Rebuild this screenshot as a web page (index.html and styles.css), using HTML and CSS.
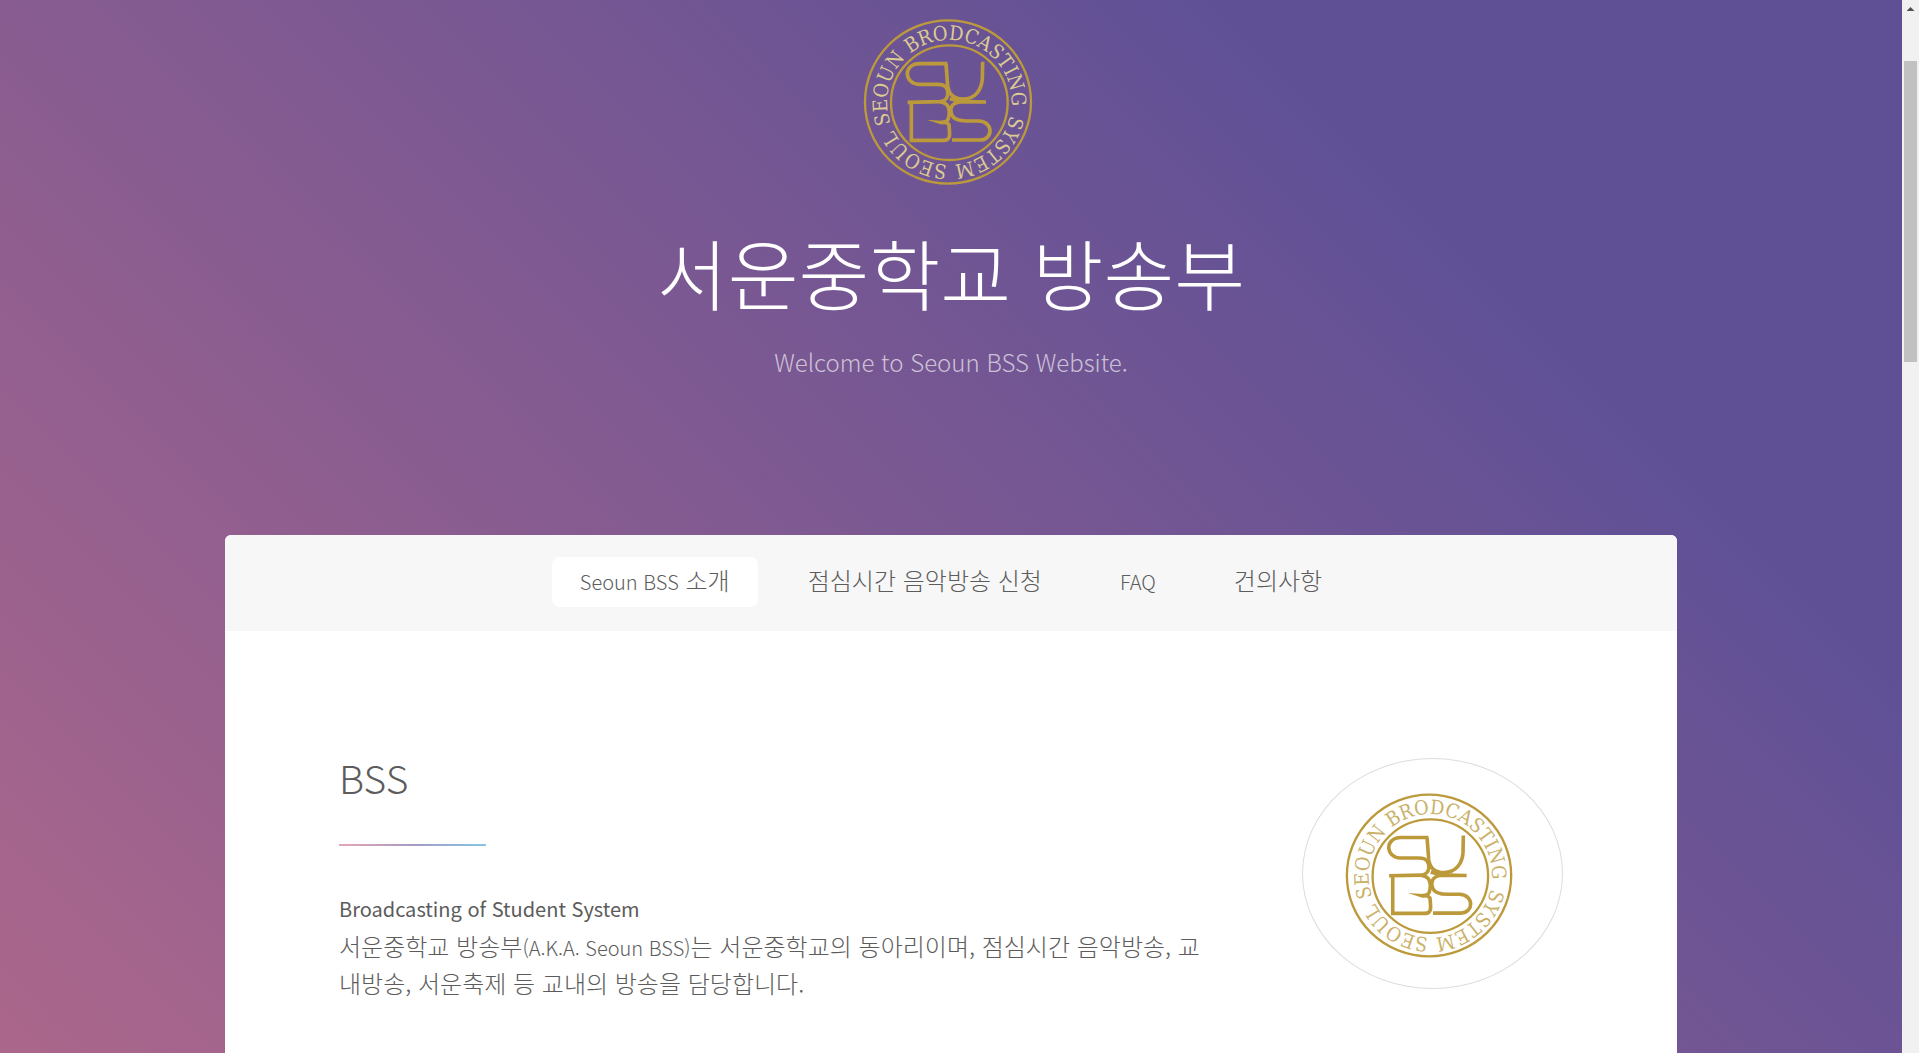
FILE: index.html
```
<!DOCTYPE html>
<html lang="ko">
<head>
<meta charset="utf-8">
<meta name="viewport" content="width=device-width, initial-scale=1">
<title>서운중학교 방송부</title>
<link rel="stylesheet" href="styles.css">
</head>
<body>
<svg class="defs" aria-hidden="true">
  <defs>
    <path id="ring" d="M297 464A187 187 0 0 1 297 90A187 187 0 0 1 297 464"/>
    <g id="emblem">
      <g class="emblem-lines">
        <ellipse cx="293" cy="276" rx="249" ry="245" stroke-width="7"/>
        <ellipse cx="297" cy="278" rx="175" ry="172" stroke-width="7"/>
        <g stroke-width="11">
          <path d="M291 161L208 161C156 162 162 222 206 223H262C286 223 294 235 292 255C290 268 284 272 270 275L172 277"/>
          <path d="M287 161L292 228C296 256 312 267 338 267C376 267 394 238 396 206L397 155"/>
          <path d="M298 266C320 272 350 276 407 276H330C300 278 298 300 304 314C310 330 330 333 350 333H385C430 334 429 389 390 390H305"/>
          <path d="M183 278V391H282C304 390 297 366 296 345C292 338 288 336 280 336M270 276C296 278 299 300 296 318C294 334 286 338 272 337"/>
        </g>
      </g>
      <path class="emblem-wedge" d="M229 329L286 333L294 343H270Z"/>
      <text class="emblem-text">
        <textPath href="#ring" startOffset="6">SEOUL</textPath>
        <textPath href="#ring" startOffset="228">SEOUN</textPath>
        <textPath href="#ring" startOffset="460">BRODCASTING</textPath>
        <textPath href="#ring" startOffset="920">SYSTEM</textPath>
      </text>
    </g>
  </defs>
</svg>

<div class="page">
  <header class="hero">
    <svg class="hero-logo" viewBox="-88 -30 783 600" role="img" aria-label="Seoun BSS"><use href="#emblem"/></svg>
    <h1>서운중학교 방송부</h1>
    <p>Welcome to Seoun BSS Website.</p>
  </header>

  <div class="panel">
    <nav class="tabs">
      <a class="tab active" href="#intro"><span class="latin">Seoun BSS</span> 소개</a>
      <a class="tab" href="#music">점심시간 음악방송 신청</a>
      <a class="tab" href="#faq"><span class="latin">FAQ</span></a>
      <a class="tab" href="#suggest">건의사항</a>
    </nav>
    <main>
      <section class="spotlight" id="intro">
        <div class="content">
          <h2>BSS</h2>
          <h3>Broadcasting of Student System</h3>
          <p>서운중학교 방송부<span class="latin">(A.K.A. Seoun BSS)</span>는 서운중학교의 동아리이며, 점심시간 음악방송, 교내방송, 서운축제 등 교내의 방송을 담당합니다.</p>
        </div>
        <div class="portrait">
          <svg viewBox="-88 -77 783 694" role="img" aria-label="Seoun BSS"><use href="#emblem"/></svg>
        </div>
      </section>
    </main>
  </div>
</div>

<div class="scrollbar" aria-hidden="true">
  <span class="arrow"></span>
  <span class="thumb"></span>
</div>
</body>
</html>
```
FILE: styles.css
```
* {
  box-sizing: border-box;
}

body {
  margin: 0;
  min-height: 100vh;
  display: grid;
  grid-template-columns: minmax(0, 1fr) 17px;
  font-family: "Noto Sans CJK KR", "Noto Sans", sans-serif;
  font-weight: 300;
  font-size: 24px;
  line-height: 37px;
  color: #5c5c5c;
}

h1, h2, h3, p {
  margin: 0;
  font-weight: 300;
}

.defs {
  position: absolute;
  width: 0;
  height: 0;
}

.latin {
  font-size: 20px;
  line-height: 1;
}

.page {
  display: flex;
  flex-direction: column;
  align-items: center;
  background: linear-gradient(45deg, #df7684 -52%, #5f5096 77%);
}

/* Hero */
.hero {
  display: flex;
  flex-direction: column;
  align-items: center;
  padding-bottom: 152px;
  text-align: center;
  color: #fff;
}

.hero-logo {
  width: 261px;
  height: 200px;
  --letters: #dccb92;
}

.hero h1 {
  margin-top: 16px;
  font-size: 77px;
  line-height: 112px;
}

.hero p {
  margin-top: 12px;
  font-size: 24px;
  line-height: 43px;
  color: rgba(255, 255, 255, 0.65);
}

/* Emblem */
.emblem-lines {
  fill: none;
  stroke: #bc9a3c;
}

.emblem-wedge {
  fill: #bc9a3c;
}

.emblem-text {
  font-family: "DejaVu Serif Condensed", "Liberation Serif", serif;
  font-weight: 400;
  font-size: 60px;
  fill: var(--letters);
}

/* Panel */
.panel {
  flex: 1;
  width: calc(100% - 48px);
  max-width: 1452px;
  border-radius: 6px 6px 0 0;
  background: #fff;
  overflow: hidden;
}

.tabs {
  display: flex;
  flex-wrap: wrap;
  justify-content: center;
  gap: 22px;
  padding: 22px 24px 24px;
  background: #f7f7f7;
}

.tab {
  padding: 0 28px 4px;
  border-radius: 8px;
  line-height: 46px;
  color: inherit;
  text-decoration: none;
}

.tab.active {
  background: #fff;
}

.spotlight {
  display: flex;
  align-items: center;
  gap: 91px;
  padding: 114px 114px 48px;
}

.content {
  flex: 1;
}

.content h2 {
  font-size: 39px;
  line-height: 64px;
}

.content h2::after {
  content: "";
  display: block;
  width: 147px;
  height: 2px;
  margin: 35px 0 44px;
  background: linear-gradient(90deg, #e8a6b4, #a79bc4 50%, #86c5e4);
}

.content h3 {
  font-size: 20px;
  font-weight: 400;
}

.portrait {
  flex: none;
  width: 261px;
  height: 231px;
  border: 1px solid #ddd;
  border-radius: 50%;
  --letters: #c9b16a;
}

.portrait svg {
  display: block;
  width: 100%;
  height: 100%;
}

/* Scrollbar */
.scrollbar {
  background: #f1f1f1;
}

.arrow {
  display: block;
  width: 8px;
  height: 4px;
  margin: 7px auto 50px;
  background: #505050;
  clip-path: polygon(50% 0, 100% 100%, 0 100%);
}

.thumb {
  display: block;
  height: 301px;
  margin: 0 2px;
  background: #c1c1c1;
}
```
